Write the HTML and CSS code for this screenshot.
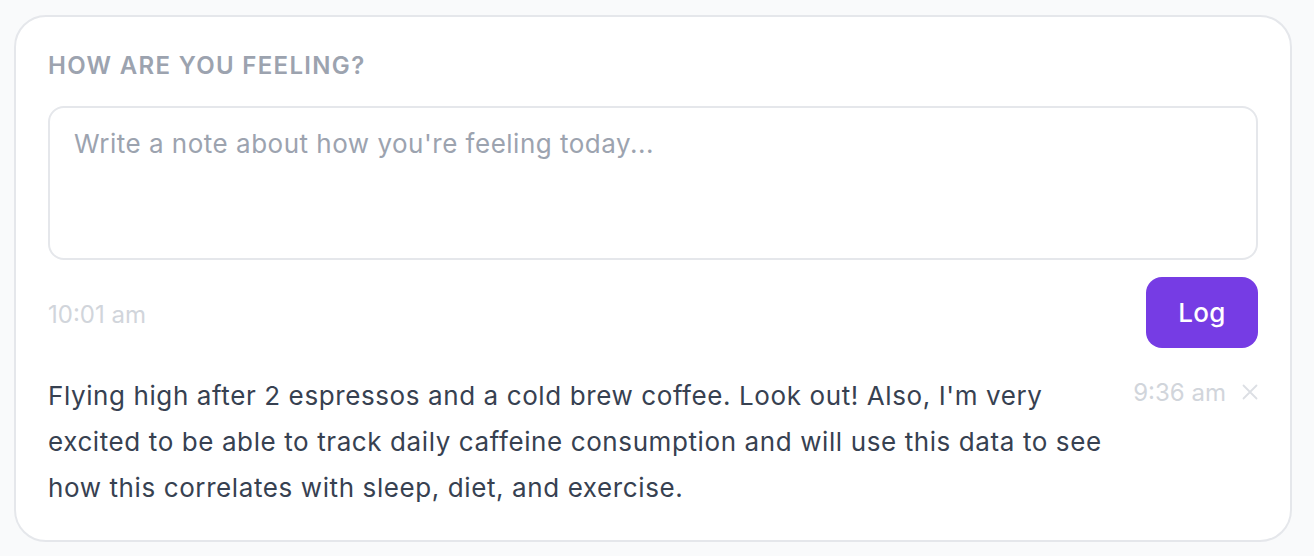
FILE: index.html
```html
<!DOCTYPE html>
<html lang="en">
<head>
<meta charset="utf-8">
<title>How are you feeling?</title>
<link rel="stylesheet" href="styles.css">
</head>
<body>
<section class="card">
  <h2 class="label">How are you feeling?</h2>
  <div class="note-box">
    <textarea class="note-input" placeholder="Write a note about how you're feeling today..."></textarea>
  </div>
  <div class="actions">
    <span class="time-now">10:01 am</span>
    <button class="log-btn" type="button">Log</button>
  </div>
  <div class="entry">
    <p class="entry-text">Flying high after 2 espressos and a cold brew coffee. Look out! Also, I'm very excited to be able to track daily caffeine consumption and will use this data to see how this correlates with sleep, diet, and exercise.</p>
    <div class="entry-meta">
      <span class="entry-time">9:36 am</span>
      <button class="remove-btn" type="button" aria-label="Remove">
        <svg width="16" height="16" viewBox="0 0 16 16" fill="none" stroke="currentColor" stroke-width="1.8" stroke-linecap="round"><path d="M1.5 1.5 L14.5 14.5 M14.5 1.5 L1.5 14.5"/></svg>
      </button>
    </div>
  </div>
</section>
</body>
</html>
```
FILE: styles.css
```css
* { box-sizing: border-box; }
html, body { margin: 0; }
body {
  background: #f9fafb;
  font-family: Inter, "Noto Sans", "Liberation Sans", sans-serif;
  padding: 15px 22px 14px 14px;
}
.card {
  background: #fff;
  border: 2px solid #e5e7eb;
  border-radius: 32px;
  padding: 33px 32px 28px;
  width: 1278px;
  height: 527px;
}
.label {
  margin: 0;
  font-size: 24px;
  line-height: 32px;
  font-weight: 600;
  letter-spacing: 0.055em;
  text-transform: uppercase;
  color: #9ca3af;
}
.note-box {
  margin-top: 24px;
}
.note-input {
  display: block;
  width: 100%;
  height: 154px;
  border: 2px solid #e5e7eb;
  border-radius: 16px;
  padding: 18px 24px 14px;
  font-family: inherit;
  font-size: 26px;
  line-height: 36px;
  letter-spacing: 0.5px;
  color: #374151;
  resize: none;
  outline: none;
}
.note-input::placeholder { color: #9ca3af; }
.actions {
  margin-top: 17px;
  display: flex;
  align-items: center;
  justify-content: space-between;
}
.time-now {
  font-size: 24px;
  color: #d1d5db;
  margin-top: 3px;
}
.log-btn {
  width: 112px;
  height: 71px;
  border: none;
  border-radius: 16px;
  background: #763ce4;
  color: #fff;
  font-family: inherit;
  font-size: 26px;
  font-weight: 500;
  letter-spacing: 0.3px;
  padding: 0;
}
.entry {
  margin-top: 25px;
  display: flex;
  gap: 20px;
  align-items: flex-start;
}
.entry-text {
  flex: 1;
  margin: 0;
  font-size: 26px;
  line-height: 46px;
  letter-spacing: 0.6px;
  color: #374151;
}
.entry-meta {
  display: flex;
  align-items: center;
  gap: 16px;
  height: 38px;
}
.entry-time {
  font-size: 24px;
  color: #d1d5db;
}
.remove-btn {
  border: none;
  background: none;
  padding: 0;
  width: 16px;
  height: 16px;
  color: #dcdfe4;
  display: flex;
}
```
